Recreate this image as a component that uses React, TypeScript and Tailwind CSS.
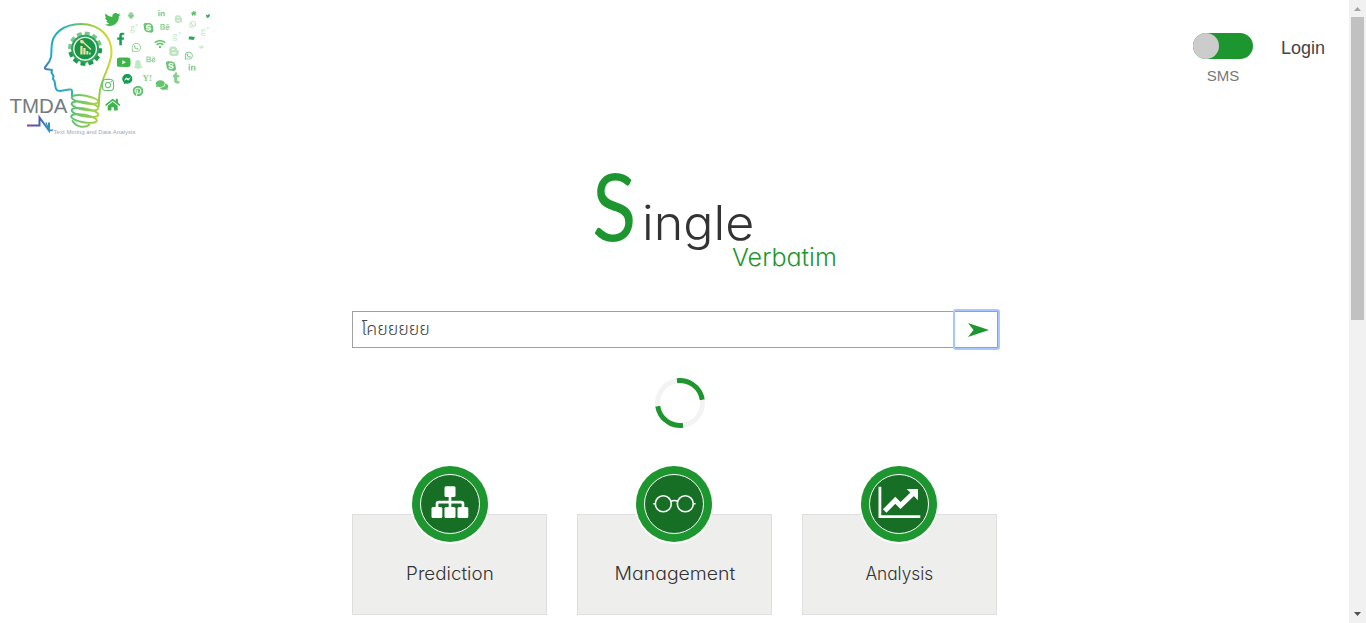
import React from "react";
import {
  FaTwitter, FaFacebookF, FaYoutube, FaInstagram, FaHome, FaPinterest, FaFacebookMessenger,
  FaWhatsapp, FaSkype, FaBehance, FaLinkedinIn, FaWifi, FaBloggerB, FaTumblr,
  FaComments, FaSnapchatGhost,
} from "react-icons/fa";
import { AiFillAndroid } from "react-icons/ai";

type Glyph = [React.ElementType, number, number, number, string];

// icon, centre x, centre y, size, colour
const GLYPHS: Glyph[] = [
  [FaTwitter, 112.5, 19.5, 16, "#3db54a"],
  [AiFillAndroid, 131, 15.5, 8, "#7dcb84"],
  [FaLinkedinIn, 161.5, 13.5, 7.5, "#86cf8c"],
  [FaBloggerB, 178.5, 19, 8.5, "#c3e6c6"],
  [FaHome, 193.7, 13.3, 5.5, "#45b956"],
  [FaTwitter, 208, 16, 4.5, "#2fae59"],
  [FaSkype, 148.5, 27.7, 11.5, "#6bc574"],
  [FaBehance, 165, 27, 9.5, "#8ed194"],
  [FaWhatsapp, 192.7, 24.3, 7.5, "#a4d9a8"],
  [FaFacebookF, 120.7, 39, 13, "#14a053"],
  [FaWhatsapp, 136.3, 47.5, 10.5, "#86cf8c"],
  [FaWifi, 160, 44, 11.5, "#5fc069"],
  [FaWifi, 201.3, 47.5, 5, "#94d49a"],
  [FaBloggerB, 174, 51.3, 11, "#c0e5c3"],
  [FaWhatsapp, 188.7, 55.7, 9, "#4fba5b"],
  [FaYoutube, 123.7, 62.3, 14.5, "#3db54a"],
  [FaSnapchatGhost, 138, 64.5, 9.5, "#c3e6c6"],
  [FaBehance, 151, 59.5, 9.5, "#8ed194"],
  [FaSkype, 171, 66, 11.5, "#6bc574"],
  [FaLinkedinIn, 192, 67.5, 8, "#86cf8c"],
  [FaFacebookMessenger, 127.3, 79, 10.5, "#14a053"],
  [FaTumblr, 176.3, 78, 11.5, "#86cf8c"],
  [FaInstagram, 108, 85, 14, "#65c26f"],
  [FaPinterest, 138, 91, 11, "#65c26f"],
  [FaComments, 162, 85, 12.5, "#65c26f"],
  [FaHome, 112.7, 104.7, 15, "#3db54a"],
];

const TEETH = Array.from({ length: 12 }, (_, i) => i * 30 + 8);

function Logo() {
  return (
    <svg className="h-35 w-55 shrink-0" viewBox="0 0 220 140">
      <defs>
        <linearGradient id="head" gradientUnits="userSpaceOnUse" x1="44" y1="60" x2="112" y2="50">
          <stop offset="0" stopColor="#4677bc" />
          <stop offset=".12" stopColor="#22a9c8" />
          <stop offset=".4" stopColor="#35b8a3" />
          <stop offset=".7" stopColor="#8ec94a" />
          <stop offset="1" stopColor="#d3db2c" />
        </linearGradient>
        <linearGradient id="coil" gradientUnits="userSpaceOnUse" x1="70" y1="0" x2="100" y2="0">
          <stop offset="0" stopColor="#55bf78" />
          <stop offset="1" stopColor="#b3d43a" />
        </linearGradient>
        <linearGradient id="pulse" gradientUnits="userSpaceOnUse" x1="27" y1="0" x2="53" y2="0">
          <stop offset="0" stopColor="#8b3fa0" />
          <stop offset=".5" stopColor="#4660b4" />
          <stop offset="1" stopColor="#28a4c8" />
        </linearGradient>
      </defs>
      <path
        d="M72 96V91Q72 89 69 89.5L60 91Q56 91 55.500 87L54.500 81L53 79L53.500 76L51.500 72.500L52 70Q49 69.500 45.500 69Q44 68 46 66Q50 62 51 57Q51.500 54 51.500 48C51.500 33 64 24 81 24C100 24 112 37 111.500 53C111 67 101 77 99.500 94L98.500 107"
        fill="none" stroke="url(#head)" strokeWidth="2" strokeLinejoin="round"
      />
      <g fill="none" stroke="url(#coil)" strokeWidth="1.900" strokeLinecap="round">
        <ellipse cx="85" cy="99.500" rx="13.500" ry="3.800" transform="rotate(10 85 99.500)" />
        <ellipse cx="85" cy="106" rx="13.500" ry="4" transform="rotate(10 85 106)" />
        <ellipse cx="85" cy="112.500" rx="13.500" ry="4" transform="rotate(10 85 112.500)" />
        <ellipse cx="84" cy="118.500" rx="13" ry="3.800" transform="rotate(10 84 118.500)" />
        <path d="M72.500 121C77 128 86 128 89.500 124.500" />
      </g>
      <g>
        {TEETH.map((a) => (
          <rect key={a} x="82.600" y="31.700" width="5" height="6" transform={`rotate(${a} 85.100 48.700)`} fill={a < 90 || a > 270 ? "#78c78a" : "#1c9a4c"} />
        ))}
        <circle cx="85.100" cy="48.700" r="14" fill="#2fa35a" />
      </g>
      <circle cx="85.100" cy="48.700" r="11.300" fill="#179647" stroke="#f4faf5" strokeWidth="1.300" />
      <path d="M80.300 46H82.600V54.500H80.300ZM83.300 48H85.600V54.500H83.300ZM86.300 51H88.300V54.500H86.300ZM89 52.500H90.700V54.500H89Z" fill="#ecdfa6" />
      <path d="M80.500 40.500L83 42L91 49.500" stroke="#ecdfa6" strokeWidth="1.500" fill="none" />
      <circle cx="82" cy="41.700" r="1.800" fill="#ecdfa6" />
      <path d="M27 125.500H39.500V117.500L49 130.500V122.500" fill="none" stroke="url(#pulse)" strokeWidth="2" strokeLinejoin="miter" />
      <path d="M46 122.500L49 130.500L53 130" fill="none" stroke="#2f93c4" strokeWidth="1.300" />
      {GLYPHS.map(([Icon, x, y, size, color], i) => (
        <Icon key={i} x={x - size / 2} y={y - size / 2} size={size} color={color} />
      ))}
      <g fontFamily="Liberation Serif, serif" fill="#c5e7c8" fontSize="10">
        <text x="130" y="31">g⁺</text>
        <text x="172.500" y="39">g⁺</text>
        <text x="200.500" y="33.500">g⁺</text>
        <text x="142.500" y="80.500" fontSize="9" fontWeight="700" fill="#86cf8c">Y!</text>
      </g>
      <path d="M189.500 36.300L195 37L193.500 40L188.300 39.300Z" fill="#27ab58" />
      <text x="9.500" y="113.300" textLength="58" lengthAdjust="spacingAndGlyphs" fontSize="21" fill="#737b82" fontFamily="Liberation Sans, sans-serif">TMDA</text>
      <text x="53.500" y="133.600" textLength="82" fontSize="6" fill="#a0a6b6" fontFamily="Liberation Sans, sans-serif">Text Mining and Data Analysis</text>
    </svg>
  );
}

const sitemap = (
  <g fill="#fff">
    <rect x="34.500" y="22.300" width="11" height="10.800" rx="1.500" />
    <rect x="21.500" y="43" width="10.800" height="11" rx="1.500" />
    <rect x="34.500" y="43" width="11" height="11" rx="1.500" />
    <rect x="47.500" y="43" width="10.800" height="11" rx="1.500" />
    <path d="M40 32V44M27 44V40Q27 38.200 29 38.200H51Q53 38.200 53 40V44" fill="none" stroke="#fff" strokeWidth="2.700" />
  </g>
);

const glasses = (
  <g fill="none" stroke="#fff" strokeWidth="1.600">
    <circle cx="29.300" cy="39.800" r="8" />
    <circle cx="51.300" cy="39.800" r="8" />
    <path d="M36.800 37.500Q40.300 35.500 43.800 37.500M19.300 39.800H21.500M59.300 39.800H61.600" />
  </g>
);

const trend = (
  <g fill="#fff">
    <path d="M19.500 22.700H22.300V51.200H61.300V53.900H19.500Z" />
    <path d="M25.700 47L36.300 36.300L41.500 41.500L54 29.500" fill="none" stroke="#fff" strokeWidth="5" />
    <path d="M47.700 25H59V36.300Z" />
  </g>
);

function Card({ label, icon, shift, stretch }: { label: string; icon: React.ReactNode; shift: string; stretch: string }) {
  return (
    <div className="flex h-[101px] w-[195px] flex-col items-center border border-[#dfdfdf] bg-[#eeeeed]">
      <svg className={`-mt-[51px] h-20 w-20 shrink-0 ${shift}`} viewBox="0 0 80 80">
        <circle cx="40" cy="41" r="39" fill="#fff" />
        <circle cx="40" cy="40" r="38" fill="#1e962f" />
        <circle cx="40" cy="40" r="29.500" fill="#176e25" stroke="#fff" strokeWidth="1" />
        {icon}
      </svg>
      <span className={`mt-[18px] text-lg leading-6 font-light whitespace-nowrap text-[#333] ${stretch}`}>{label}</span>
    </div>
  );
}

export default function App() {
  return (
    <div className="flex h-[623px] w-full overflow-hidden bg-white font-['Inter',sans-serif] [font-feature-settings:'cv11']">
      <main className="flex min-w-0 flex-1 flex-col">
        <header className="flex h-40 items-start justify-between pr-6 font-['Liberation_Sans',sans-serif]">
          <Logo />
          <div className="flex pt-[33px]">
            <div className="flex w-[60px] flex-col items-center">
              <div className="h-[26px] w-[60px] rounded-full bg-[#1e962f]">
                <div className="h-[26px] w-[26px] rounded-full bg-[#ccc]" />
              </div>
              <span className="mt-[7px] text-[15px] leading-5 text-[#777]">SMS</span>
            </div>
            <span className="ml-7 pt-[3px] text-lg leading-6 text-[#444]">Login</span>
          </div>
        </header>

        <h1 className="flex h-[151px] shrink-0 pl-[592px]">
          <span className="-mt-[3px] w-[50px] origin-left scale-x-[.87] font-['Lato',sans-serif] text-[94px] leading-[95px] font-normal text-[#1e962f]">S</span>
          <span className="flex flex-col">
            <span className="mt-[35px] origin-left scale-x-[1.045] text-[48px] leading-[56px] font-light text-[#333]">ingle</span>
            <span className="-mt-[9px] ml-[90px] origin-left scale-x-[1.045] text-2xl leading-8 font-light text-[#1e962f]">Verbatim</span>
          </span>
        </h1>

        <div className="ml-[352px] flex h-[37px] w-[646px] shrink-0 border border-[#a0a0a0]">
          <div className="flex-1 origin-left scale-x-[1.05] pt-px pl-2 font-['Noto_Sans_Thai','Noto_Sans',sans-serif] text-[17px] leading-[35px] font-light text-[#444]">โคยยยยย</div>
          <button className="-my-px -mr-px flex w-[43px] items-center justify-center rounded-[1px] pl-1 outline-2 outline-[#a6c8ff]">
            <svg className="h-4 w-6" viewBox="0 0 24 16">
              <path d="M1 1L22 8L1 15L6.500 8Z" fill="#1e962f" />
            </svg>
          </button>
        </div>

        <div className="mt-[30px] ml-[655px] h-[50px] w-[50px] shrink-0 rotate-[37deg] rounded-full border-[5px] border-[#f3f3f3] border-t-[#1e962f] border-b-[#1e962f]" />

        <section className="mt-[86px] ml-[352px] flex gap-[30px]">
          <Card label="Prediction" icon={sitemap} shift="translate-x-0" stretch="scale-x-[1.045]" />
          <Card label="Management" icon={glasses} shift="-translate-x-px" stretch="scale-x-[1.08]" />
          <Card label="Analysis" icon={trend} shift="-translate-x-px" stretch="scale-x-[.96]" />
        </section>
      </main>

      <aside className="flex w-[17px] shrink-0 flex-col items-center bg-[#f1f1f1]">
        <svg className="h-[17px] w-[17px] shrink-0" viewBox="0 0 17 17"><path d="M5 11L8.500 7L12 11Z" fill="#a3a3a3" /></svg>
        <div className="h-[303px] w-[13px] bg-[#c1c1c1]" />
        <svg className="mt-auto h-[17px] w-[17px]" viewBox="0 0 17 17"><path d="M5 6L8.500 10L12 6Z" fill="#505050" /></svg>
      </aside>
    </div>
  );
}
